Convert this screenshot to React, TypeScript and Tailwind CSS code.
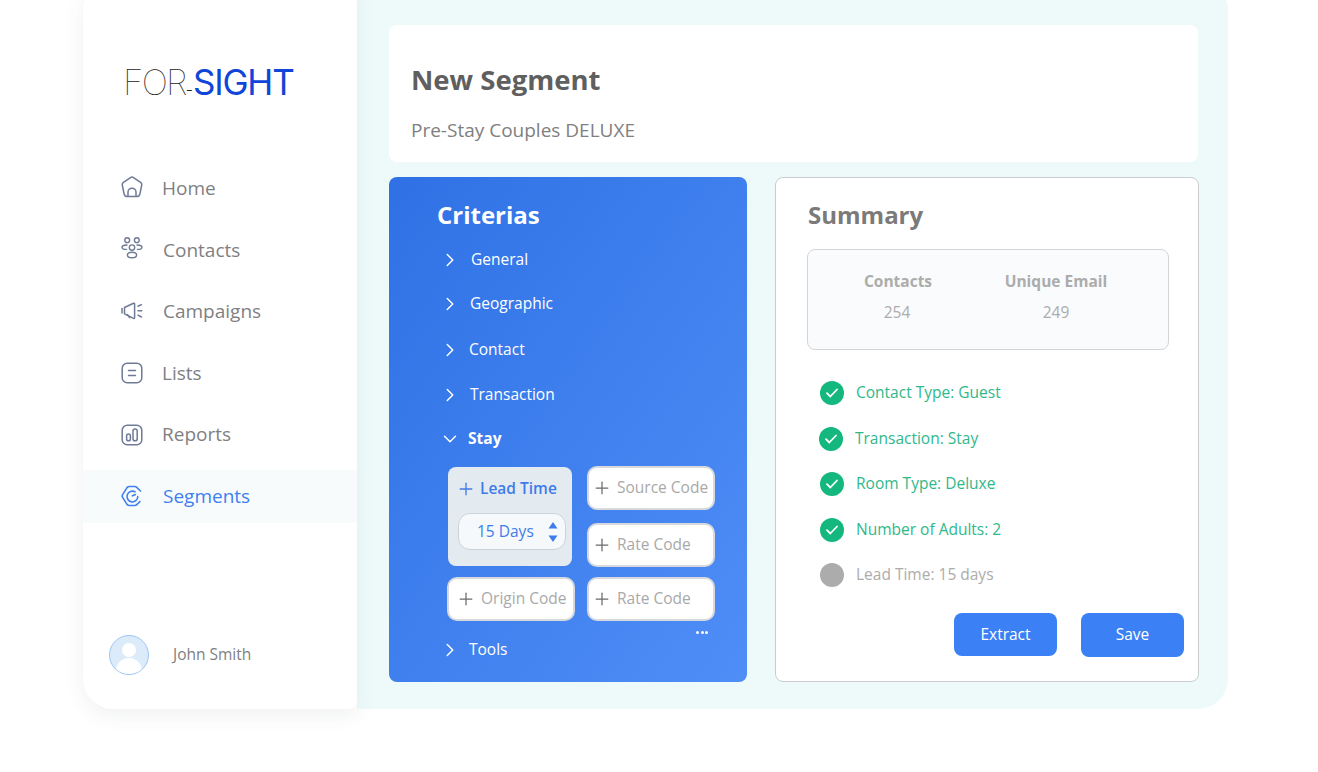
import { ChevronDown, ChevronRight, Plus } from "lucide-react";
import type { ReactNode } from "react";

function HomeIcon() {
  return (
    <svg width="22" height="22" viewBox="0 0 22 22" fill="none" stroke="#6f7a96" strokeWidth="1.5" strokeLinejoin="round">
      <path d="M9.5 1.6 Q11 0.6 12.5 1.6 L19.6 6.4 Q21 7.4 20.7 9 L19 17.6 Q18.4 20.6 15.6 20.6 H6.4 Q3.6 20.6 3 17.6 L1.3 9 Q1 7.4 2.4 6.4 Z" />
      <path d="M7 20.6 V16.2 A4 4 0 0 1 15 16.2 V20.6" />
    </svg>
  );
}

function ContactsIcon() {
  return (
    <svg width="22" height="22" viewBox="0 0 22 22" fill="none" stroke="#6f7a96" strokeWidth="1.4" strokeLinecap="round">
      <circle cx="6.2" cy="3.2" r="2.4" />
      <circle cx="15.8" cy="3.2" r="2.4" />
      <circle cx="11" cy="10.6" r="2.7" />
      <ellipse cx="11" cy="18" rx="4.6" ry="2.8" />
      <path d="M6 8 Q1.2 8 1 10.2 Q1.2 12.4 5.4 12.4" />
      <path d="M16 8 Q20.8 8 21 10.2 Q20.8 12.4 16.6 12.4" />
    </svg>
  );
}

function CampaignIcon() {
  return (
    <svg width="22" height="18" viewBox="0 0 22 18" fill="none" stroke="#6f7a96" strokeWidth="1.5" strokeLinejoin="round" strokeLinecap="round">
      <path d="M1 6.5 V11" />
      <path d="M3.5 5.5 L12.5 1.2 Q13.6 1 13.6 2.2 V15.6 Q13.6 16.8 12.5 16.4 L3.5 11.8 Z" />
      <path d="M6.5 12.6 L8.6 15.6" />
      <path d="M17 4.2 L20.4 2.6 M17 8.8 H20.8 M17 13.2 L20.4 15" />
    </svg>
  );
}

function ListIcon() {
  return (
    <svg width="22" height="22" viewBox="0 0 22 22" fill="none" stroke="#6f7a96" strokeWidth="1.5" strokeLinecap="round">
      <rect x="1.2" y="1.2" width="19.6" height="19.6" rx="5" />
      <path d="M7.5 8.5 H14.5 M7.5 13.5 H14.5" />
    </svg>
  );
}

function ReportIcon() {
  return (
    <svg width="22" height="22" viewBox="0 0 22 22" fill="none" stroke="#6f7a96" strokeWidth="1.5">
      <rect x="1.2" y="1.2" width="19.6" height="19.6" rx="5" />
      <rect x="5.6" y="10" width="3.8" height="6.8" rx="1.9" />
      <rect x="12" y="5" width="4.2" height="11.8" rx="2.1" />
    </svg>
  );
}

function SegmentIcon() {
  return (
    <svg width="22" height="22" viewBox="0 0 22 22" fill="none" stroke="#3f7ff0" strokeWidth="1.6" strokeLinecap="round" strokeLinejoin="round">
      <path d="M19.5 6 L16 2.6 Q15 1.5 13.5 1.5 H8.5 Q7 1.5 6 2.6 L1.6 9.6 Q0.8 11 1.6 12.4 L6 19.4 Q7 20.5 8.5 20.5 H13.5 Q15 20.5 16 19.4 L19 16.5" />
      <path d="M14 6.8 A5.4 5.4 0 1 0 16.8 11.6" />
      <path d="M11.4 10.8 L14.4 9.6" />
    </svg>
  );
}

function NavItem({ icon, label, active, x, lift = "" }: { icon: ReactNode; label: string; active?: boolean; x: string; lift?: string }) {
  return (
    <div className={`flex h-[53px] items-center pl-[38px] ${active ? "bg-[#f8fbfc] text-[#3f7ff0]" : "text-[#7f8083]"}`}>
      <div className={`flex w-[22px] justify-center ${lift}`}>{icon}</div>
      <span className={`text-[19px] ${x}`}>{label}</span>
    </div>
  );
}

function CriteriaRow({ label, className }: { label: string; className: string }) {
  return (
    <div className={`flex items-center text-[15.5px] text-white ${className}`}>
      <ChevronRight size={22} strokeWidth={1.6} className="ml-[-6px]" />
      <span>{label}</span>
    </div>
  );
}

function Chip({ label, className }: { label: string; className: string }) {
  return (
    <div className={`flex h-[44px] items-center rounded-[10px] border-2 border-[#d7d9dc] bg-white text-[15.5px] text-[#a9a9a9] ${className}`}>
      <Plus size={20} strokeWidth={1.5} className="mr-[5px] shrink-0 text-[#6b6b6b]" />
      <span className="whitespace-nowrap">{label}</span>
    </div>
  );
}

function Check({ label, done = true, className = "" }: { label: string; done?: boolean; className?: string }) {
  return (
    <div className={`flex h-[24px] items-center text-[15.5px] ${done ? "text-[#2fb88a]" : "text-[#acacac]"} ${className}`}>
      <div className={`mr-[12px] flex h-[24px] w-[24px] items-center justify-center rounded-full ${done ? "bg-[#14b87f]" : "bg-[#acacac]"}`}>
        {done && (
          <svg width="12" height="10" viewBox="0 0 12 10" fill="none" stroke="white" strokeWidth="1.8" strokeLinecap="round" strokeLinejoin="round">
            <path d="M1 5.2 L4.3 8.5 L11 1.5" />
          </svg>
        )}
      </div>
      {label}
    </div>
  );
}

export default function App() {
  return (
    <div className="h-[772px] w-[1318px] overflow-hidden bg-white font-['Open_Sans',sans-serif]">
      <div className="ml-[83px] mt-[-20px] flex h-[729px] w-[1145px]">
        <aside className="z-10 flex w-[274px] shrink-0 flex-col rounded-l-[30px] rounded-r-[8px] bg-white shadow-[0_6px_20px_rgba(60,80,100,0.08)]">
          <div className="ml-[40px] mt-[79px] h-[46px] whitespace-nowrap font-['Inter',sans-serif] text-[35px] leading-[46px]">
            <span className="font-thin tracking-[-1.8px] text-[#222]">FOR</span>
            <span className="text-[16px] font-light text-[#222]">-</span>
            <span className="font-normal tracking-[-1.2px] text-[#0f45d8]">SIGHT</span>
          </div>
          <nav className="mt-[57px] flex flex-col gap-[8.5px]">
            <NavItem icon={<HomeIcon />} label="Home" x="ml-[19px]" lift="mb-[4px]" />
            <NavItem icon={<ContactsIcon />} label="Contacts" x="ml-[20px]" lift="mb-[4px]" />
            <NavItem icon={<CampaignIcon />} label="Campaigns" x="ml-[20px]" lift="mb-[2px]" />
            <NavItem icon={<ListIcon />} label="Lists" x="ml-[19px]" />
            <NavItem icon={<ReportIcon />} label="Reports" x="ml-[19px]" />
            <NavItem icon={<SegmentIcon />} label="Segments" x="ml-[20px]" active />
          </nav>
          <div className="ml-[26px] mt-[112px] flex items-center">
            <div className="relative h-[40px] w-[40px] overflow-hidden rounded-full border border-[#9cc6f7] bg-[#dcebfa]">
              <div className="mx-auto mt-[7px] h-[14px] w-[14px] rounded-full bg-white" />
              <div className="mx-auto mt-[1px] h-[20px] w-[26px] rounded-t-full bg-white" />
            </div>
            <span className="ml-[24px] mt-[1px] text-[15.5px] text-[#808080]">John Smith</span>
          </div>
        </aside>

        <main className="grow rounded-r-[30px] bg-[#eefafa] pl-[32px] pt-[45px]">
          <header className="h-[137px] w-[809px] rounded-[8px] bg-white pl-[22px] pt-[35px]">
            <h1 className="text-[27.5px] font-bold leading-[40px] text-[#5f5f5f]">New Segment</h1>
            <p className="mt-[17px] text-[19px] leading-[26px] text-[#808080]">Pre-Stay Couples DELUXE</p>
          </header>

          <div className="mt-[15px] flex gap-[28px]">
            <section className="h-[505px] w-[358px] rounded-[8px] bg-linear-to-br from-[#2f71e5] to-[#4f8ef7] pl-[56px] pt-[21px]">
              <h2 className="ml-[-8px] text-[24px] font-bold leading-[34px] text-white">Criterias</h2>
              <CriteriaRow label="General" className="mt-[17px] h-[22px] gap-[10px]" />
              <CriteriaRow label="Geographic" className="mt-[22px] h-[22px] gap-[9px]" />
              <CriteriaRow label="Contact" className="mt-[24px] h-[22px] gap-[8px]" />
              <CriteriaRow label="Transaction" className="mt-[23px] h-[22px] gap-[9px]" />
              <div className="mt-[22px] flex h-[22px] items-center gap-[7px] text-[15.5px] font-bold text-white">
                <ChevronDown size={22} strokeWidth={1.6} className="ml-[-6px]" />
                Stay
              </div>
              <div className="mt-[16px] flex gap-[12px]">
                <div className="ml-[3px] flex w-[127px] flex-col">
                  <div className="mt-[1px] h-[99px] w-[124px] rounded-[8px] bg-[#e4ebf0] pl-[8px] pt-[12px]">
                    <div className="flex h-[20px] items-center text-[15.5px] font-semibold text-[#3f7cea]">
                      <Plus size={20} strokeWidth={1.6} className="mr-[4px]" />
                      Lead Time
                    </div>
                    <div className="ml-[2px] mt-[14px] flex h-[37px] w-[108px] items-center rounded-[12px] border border-[#ccd3da] bg-[#f5f9fc] pl-[18px] text-[15.5px] text-[#3f7cea]">
                      15 Days
                      <svg width="10" height="22" viewBox="0 0 10 22" fill="#3f7cea" className="ml-[14px]">
                        <path d="M5 1 L9.5 7.5 H0.5 Z M5 21 L0.5 14.5 H9.5 Z" />
                      </svg>
                    </div>
                  </div>
                  <Chip label="Origin Code" className="ml-[-1px] mt-[11px] pl-[7px]" />
                </div>
                <div className="flex w-[128px] flex-col">
                  <Chip label="Source Code" className="pl-[3px]" />
                  <Chip label="Rate Code" className="mt-[13px] pl-[3px]" />
                  <Chip label="Rate Code" className="mt-[10px] pl-[3px]" />
                  <div className="ml-[109px] mt-[10px] flex gap-[1.5px]">
                    <span className="h-[3px] w-[3px] rounded-full bg-white" />
                    <span className="h-[3px] w-[3px] rounded-full bg-white" />
                    <span className="h-[3px] w-[3px] rounded-full bg-white" />
                  </div>
                </div>
              </div>
              <CriteriaRow label="Tools" className="mt-[5px] h-[22px] gap-[8px]" />
            </section>

            <section className="h-[505px] w-[424px] rounded-[8px] border border-[#c9cdd0] bg-white pl-[31px] pt-[20px]">
              <h2 className="ml-[1px] text-[24px] font-bold leading-[34px] text-[#7a7a7a]">Summary</h2>
              <div className="mt-[17px] flex h-[101px] w-[362px] rounded-[8px] border border-[#d3d6d9] bg-[#f9fbfc] pt-[19px] text-[#acacac]">
                <div className="ml-[55px] flex w-[70px] flex-col items-center">
                  <span className="text-[15.5px] font-bold leading-[24px]">Contacts</span>
                  <span className="mr-[2px] mt-[7px] text-[15.5px] leading-[24px]">254</span>
                </div>
                <div className="ml-[71px] flex w-[104px] flex-col items-center">
                  <span className="whitespace-nowrap text-[15.5px] font-bold leading-[24px]">Unique Email</span>
                  <span className="mt-[7px] text-[15.5px] leading-[24px]">249</span>
                </div>
              </div>
              <div className="ml-[13px] mt-[31px] flex flex-col gap-[21.5px]">
                <Check label="Contact Type: Guest" />
                <Check label="Transaction: Stay" className="ml-[-1px]" />
                <Check label="Room Type: Deluxe" />
                <Check label="Number of Adults: 2" />
                <Check label="Lead Time: 15 days" done={false} />
              </div>
              <div className="ml-[147px] mt-[26px] flex gap-[24px]">
                <button className="h-[43px] w-[103px] rounded-[8px] bg-[#3b80f5] text-[15.5px] text-white">Extract</button>
                <button className="h-[44px] w-[103px] rounded-[8px] bg-[#3b80f5] text-[15.5px] text-white">Save</button>
              </div>
            </section>
          </div>
        </main>
      </div>
    </div>
  );
}
